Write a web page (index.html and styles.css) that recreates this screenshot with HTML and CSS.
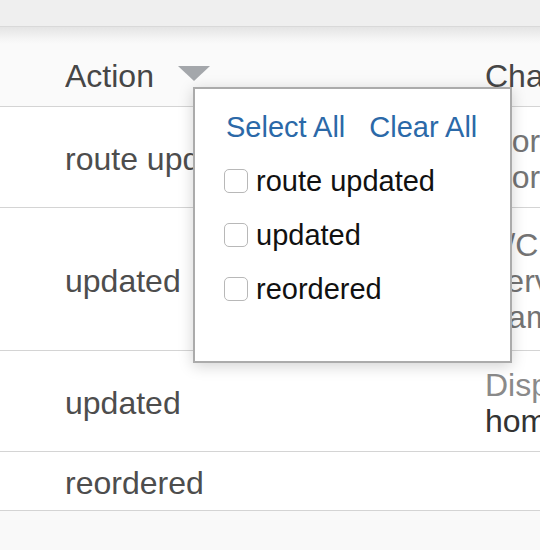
FILE: index.html
```html
<!DOCTYPE html>
<html>
<head>
<meta charset="utf-8">
<link rel="stylesheet" href="styles.css">
</head>
<body>
<div class="page">
  <div class="topbar"></div>
  <div class="shade"></div>
  <div class="table">
    <div class="row head">
      <div class="c-action">Action<span class="caret"></span></div>
      <div class="c-change">Change</div>
    </div>
    <div class="row">
      <div class="c-action">route updated</div>
      <div class="c-change">
        <div class="label">Mor order</div>
        <div class="label">Mor order</div>
      </div>
    </div>
    <div class="row tall">
      <div class="c-action">updated</div>
      <div class="c-change">
        <div class="label">A/C status</div>
        <div class="label">Service</div>
        <div class="label">Name</div>
      </div>
    </div>
    <div class="row">
      <div class="c-action">updated</div>
      <div class="c-change">
        <div class="label dim">Display name</div>
        <div class="value">home</div>
      </div>
    </div>
    <div class="row short">
      <div class="c-action">reordered</div>
      <div class="c-change"></div>
    </div>
  </div>
  <div class="footer"></div>

  <div class="dropdown">
    <div class="links">
      <a class="link">Select All</a>
      <a class="link">Clear All</a>
    </div>
    <label class="opt"><input type="checkbox" class="box"><span>route updated</span></label>
    <label class="opt"><input type="checkbox" class="box"><span>updated</span></label>
    <label class="opt"><input type="checkbox" class="box"><span>reordered</span></label>
  </div>
</div>
</body>
</html>
```
FILE: styles.css
```css
html, body {
  margin: 0;
  padding: 0;
  background: #ffffff;
  overflow: hidden;
}
body {
  font-family: "Liberation Sans", Arial, sans-serif;
  width: 540px;
  height: 550px;
}
.page {
  position: relative;
  width: 540px;
  height: 550px;
  overflow: hidden;
}
.topbar {
  height: 26px;
  background: #efefef;
  border-bottom: 1px solid #d9d9d9;
}
.shade {
  height: 17px;
  background: linear-gradient(#e4e4e4, #f5f5f5 70%, #fafafa);
}
.table {
  background: #ffffff;
}
.row {
  display: grid;
  grid-template-columns: 420px 1fr;
  align-items: center;
  padding: 16px 0 12px 65px;
  border-bottom: 1px solid #d4d4d4;
  font-size: 32px;
  line-height: 36px;
  color: #4d4d4d;
  white-space: nowrap;
}
.row.head {
  background: #fafafa;
  padding-top: 14px;
  padding-bottom: 12px;
  color: #464646;
}
.row.tall {
  padding-top: 19px;
  padding-bottom: 15px;
}
.row.short {
  padding-top: 13px;
  padding-bottom: 9px;
}
.c-action {
  overflow: hidden;
}
.c-change {
  overflow: hidden;
}
.label {
  color: #747474;
}
.label.dim {
  color: #8a8a8a;
}
.value {
  color: #333333;
}
.caret {
  display: inline-block;
  width: 0;
  height: 0;
  margin-left: 24px;
  border-left: 16px solid transparent;
  border-right: 16px solid transparent;
  border-top: 15px solid #a4a7ab;
  vertical-align: 6px;
}
.footer {
  height: 60px;
  background: #f9f9f9;
}
.dropdown {
  position: absolute;
  left: 193px;
  top: 87px;
  width: 319px;
  height: 276px;
  box-sizing: border-box;
  background: #ffffff;
  border: 2px solid #ababab;
  box-shadow: 0 3px 14px rgba(0, 0, 0, 0.18);
  padding: 20px 0 0 31px;
  font-size: 29px;
  line-height: 36px;
  color: #111111;
}
.links {
  display: flex;
  gap: 24px;
}
.link {
  color: #2b69a8;
  text-decoration: none;
  cursor: pointer;
}
.opt {
  display: flex;
  align-items: center;
  margin-top: 18px;
  margin-left: -2px;
  gap: 8px;
}
.box {
  appearance: none;
  -webkit-appearance: none;
  margin: 0;
  width: 24px;
  height: 24px;
  box-sizing: border-box;
  border: 1.5px solid #b8b8b8;
  border-radius: 5px;
  background: #ffffff;
  flex: none;
}
```
